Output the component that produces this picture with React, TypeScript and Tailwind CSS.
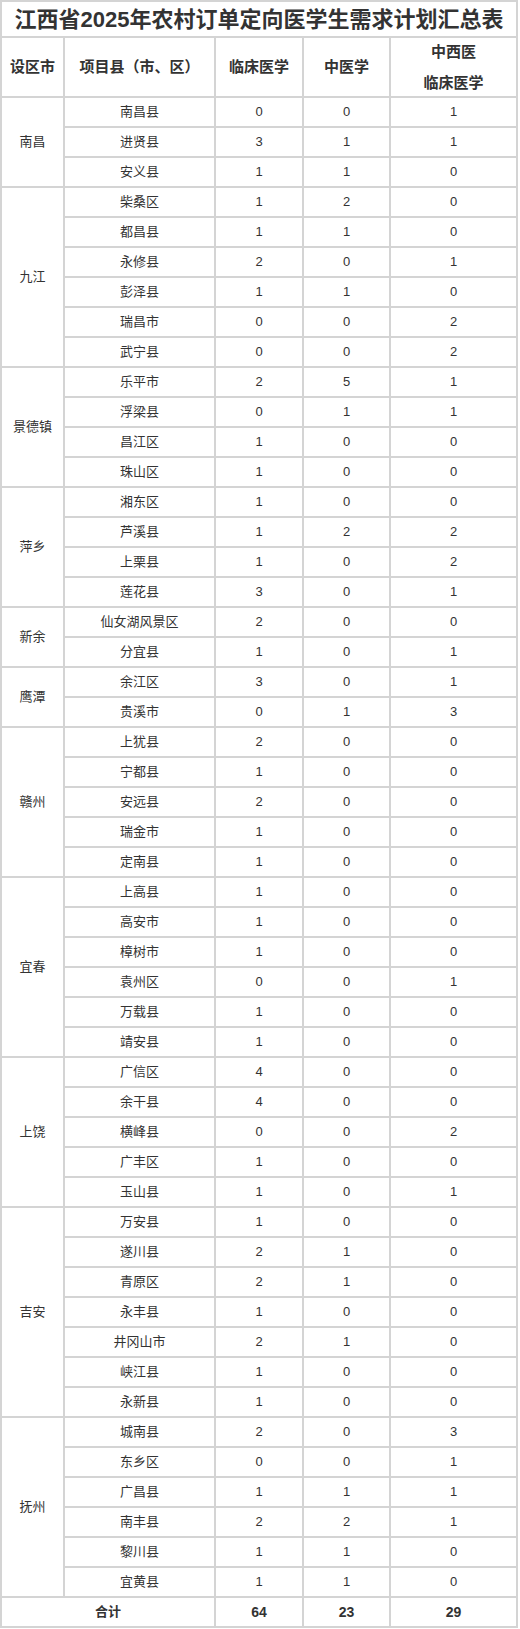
type Row = [string, number, number, number];
type Group = { city: string; rows: Row[] };

const groups: Group[] = [
  { city: "南昌", rows: [["南昌县", 0, 0, 1], ["进贤县", 3, 1, 1], ["安义县", 1, 1, 0]] },
  {
    city: "九江",
    rows: [
      ["柴桑区", 1, 2, 0],
      ["都昌县", 1, 1, 0],
      ["永修县", 2, 0, 1],
      ["彭泽县", 1, 1, 0],
      ["瑞昌市", 0, 0, 2],
      ["武宁县", 0, 0, 2],
    ],
  },
  {
    city: "景德镇",
    rows: [["乐平市", 2, 5, 1], ["浮梁县", 0, 1, 1], ["昌江区", 1, 0, 0], ["珠山区", 1, 0, 0]],
  },
  {
    city: "萍乡",
    rows: [["湘东区", 1, 0, 0], ["芦溪县", 1, 2, 2], ["上栗县", 1, 0, 2], ["莲花县", 3, 0, 1]],
  },
  { city: "新余", rows: [["仙女湖风景区", 2, 0, 0], ["分宜县", 1, 0, 1]] },
  { city: "鹰潭", rows: [["余江区", 3, 0, 1], ["贵溪市", 0, 1, 3]] },
  {
    city: "赣州",
    rows: [
      ["上犹县", 2, 0, 0],
      ["宁都县", 1, 0, 0],
      ["安远县", 2, 0, 0],
      ["瑞金市", 1, 0, 0],
      ["定南县", 1, 0, 0],
    ],
  },
  {
    city: "宜春",
    rows: [
      ["上高县", 1, 0, 0],
      ["高安市", 1, 0, 0],
      ["樟树市", 1, 0, 0],
      ["袁州区", 0, 0, 1],
      ["万载县", 1, 0, 0],
      ["靖安县", 1, 0, 0],
    ],
  },
  {
    city: "上饶",
    rows: [
      ["广信区", 4, 0, 0],
      ["余干县", 4, 0, 0],
      ["横峰县", 0, 0, 2],
      ["广丰区", 1, 0, 0],
      ["玉山县", 1, 0, 1],
    ],
  },
  {
    city: "吉安",
    rows: [
      ["万安县", 1, 0, 0],
      ["遂川县", 2, 1, 0],
      ["青原区", 2, 1, 0],
      ["永丰县", 1, 0, 0],
      ["井冈山市", 2, 1, 0],
      ["峡江县", 1, 0, 0],
      ["永新县", 1, 0, 0],
    ],
  },
  {
    city: "抚州",
    rows: [
      ["城南县", 2, 0, 3],
      ["东乡区", 0, 0, 1],
      ["广昌县", 1, 1, 1],
      ["南丰县", 2, 2, 1],
      ["黎川县", 1, 1, 0],
      ["宜黄县", 1, 1, 0],
    ],
  },
];

const span: Record<number, string> = {
  2: "row-span-2",
  3: "row-span-3",
  4: "row-span-4",
  5: "row-span-5",
  6: "row-span-6",
  7: "row-span-7",
};

const cell = "flex items-center justify-center bg-white text-center";

export default function App() {
  return (
    <div
      className="w-[520px] bg-white text-[#333]"
      style={{ fontFamily: '"Liberation Sans", "Noto Sans CJK SC", sans-serif' }}
    >
      <div className="grid w-[518px] grid-cols-[61px_149px_86px_85px_125px] grid-rows-[34px_58px] auto-rows-[28px] gap-[2px] bg-[#d4d4d4] p-[2px] text-[13px]">
        <div className={`${cell} col-span-5 text-[22px] font-bold`}>
          江西省2025年农村订单定向医学生需求计划汇总表
        </div>
        <div className={`${cell} text-[15px] font-bold`}>设区市</div>
        <div className={`${cell} text-[15px] font-bold`}>项目县（市、区）</div>
        <div className={`${cell} text-[15px] font-bold`}>临床医学</div>
        <div className={`${cell} text-[15px] font-bold`}>中医学</div>
        <div className={`${cell} flex-col text-[15px] font-bold leading-[31px]`}>
          <span>中西医</span>
          <span>临床医学</span>
        </div>
        {groups.map((g) => [
          <div key={g.city} className={`${cell} ${span[g.rows.length]}`}>
            {g.city}
          </div>,
          ...g.rows.map((r, i) => (
            <div key={g.city + i} className="contents">
              <div className={cell}>{r[0]}</div>
              <div className={cell}>{r[1]}</div>
              <div className={cell}>{r[2]}</div>
              <div className={cell}>{r[3]}</div>
            </div>
          )),
        ])}
        <div className={`${cell} col-span-2 font-bold`}>合计</div>
        <div className={`${cell} text-[14px] font-bold`}>64</div>
        <div className={`${cell} text-[14px] font-bold`}>23</div>
        <div className={`${cell} text-[14px] font-bold`}>29</div>
      </div>
    </div>
  );
}
